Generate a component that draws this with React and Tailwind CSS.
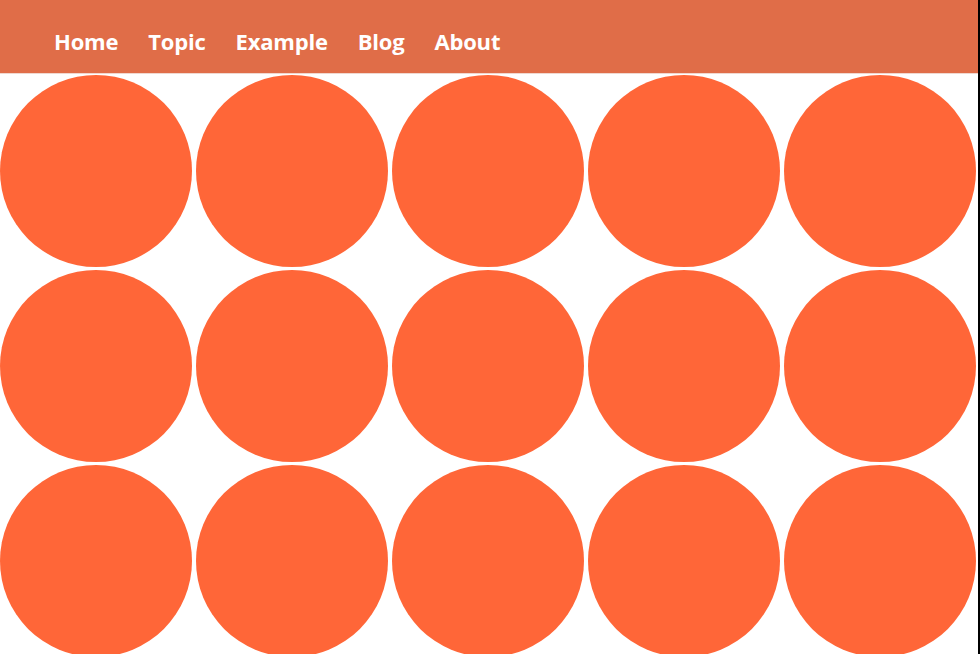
export default function App() {
  const nav = ['Home', 'Topic', 'Example', 'Blog', 'About'];
  const circles = Array.from({ length: 15 });

  return (
    <div className="h-[654px] w-[980px] overflow-hidden bg-white border-r-2 border-black font-['Open_Sans',sans-serif]">
      <header className="h-[74px] bg-[#e06d48] pl-[54px] pt-[30px] border-b border-[#f0d8d0]">
        <nav className="flex gap-x-[30px]">
          {nav.map((item) => (
            <a key={item} className="text-[22px] leading-[22px] font-bold text-white tracking-[-0.2px]">
              {item}
            </a>
          ))}
        </nav>
      </header>

      <main className="flex flex-wrap gap-x-[4px] gap-y-[3px] pt-[1px] w-[980px]">
        {circles.map((_, i) => (
          <div key={i} className="w-[192px] h-[192px] rounded-full bg-[#ff6638]" />
        ))}
      </main>
    </div>
  );
}
